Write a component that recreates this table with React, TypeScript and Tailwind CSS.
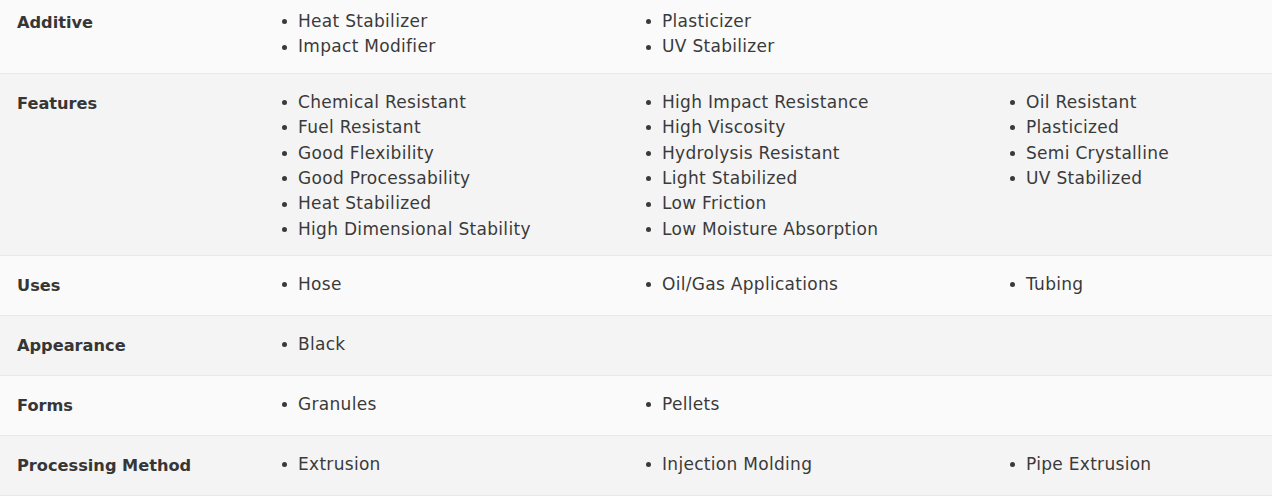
const rows: { label: string; cols: string[][] }[] = [
  { label: 'Additive', cols: [['Heat Stabilizer', 'Impact Modifier'], ['Plasticizer', 'UV Stabilizer'], []] },
  {
    label: 'Features',
    cols: [
      ['Chemical Resistant', 'Fuel Resistant', 'Good Flexibility', 'Good Processability', 'Heat Stabilized', 'High Dimensional Stability'],
      ['High Impact Resistance', 'High Viscosity', 'Hydrolysis Resistant', 'Light Stabilized', 'Low Friction', 'Low Moisture Absorption'],
      ['Oil Resistant', 'Plasticized', 'Semi Crystalline', 'UV Stabilized'],
    ],
  },
  { label: 'Uses', cols: [['Hose'], ['Oil/Gas Applications'], ['Tubing']] },
  { label: 'Appearance', cols: [['Black'], [], []] },
  { label: 'Forms', cols: [['Granules'], ['Pellets'], []] },
  { label: 'Processing Method', cols: [['Extrusion'], ['Injection Molding'], ['Pipe Extrusion']] },
];

export default function App() {
  return (
    <div className="w-[1272px] h-[497px] overflow-hidden bg-white" style={{ fontFamily: '"DejaVu Sans", sans-serif' }}>
      <div className="-mt-[7px]">
        {rows.map((row, i) => (
          <div
            key={row.label}
            className={`flex min-h-[60px] pt-[15px] pb-[13px] border-b border-[#e9e9e9] ${i % 2 === 0 ? 'bg-[#fafafa]' : 'bg-[#f4f4f4]'}`}
          >
            <div className="w-[280px] shrink-0 pl-[17px] text-[16.2px] leading-[30px] font-bold text-[#363636]">
              {row.label}
            </div>
            <div className="flex flex-1">
              {row.cols.map((col, j) => (
                <ul key={j} className="w-[364px] shrink-0 pt-[1px]">
                  {col.map((item) => (
                    <li key={item} className="flex items-center h-[25.4px] text-[17px] text-[#3a3a3a] tracking-[0.3px]">
                      <span className="w-[5px] h-[5px] rounded-full bg-[#3a3a3a] ml-[2px] mr-[11px] shrink-0" />
                      <span>{item}</span>
                    </li>
                  ))}
                </ul>
              ))}
            </div>
          </div>
        ))}
      </div>
    </div>
  );
}
